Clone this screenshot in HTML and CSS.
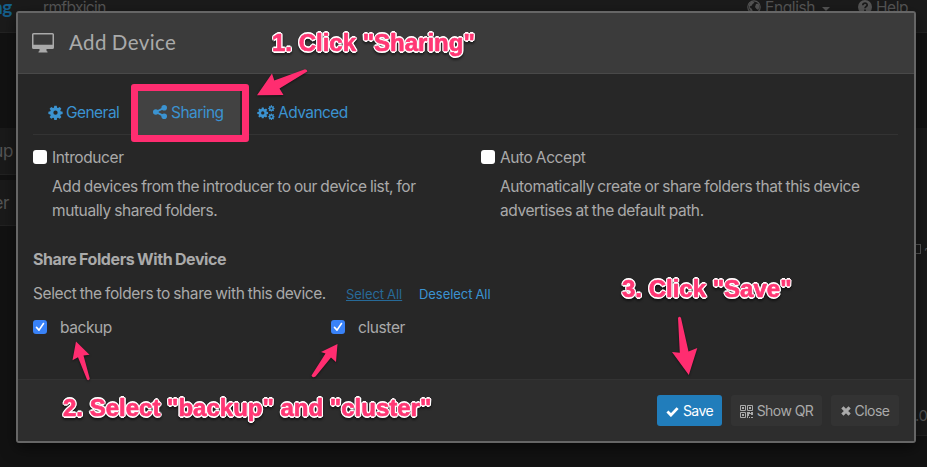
FILE: index.html
```html
<!DOCTYPE html>
<html lang="en">
<head>
<meta charset="utf-8">
<title>Add Device</title>
<link rel="stylesheet" href="styles.css">
</head>
<body>
<svg class="defs" width="0" height="0">
  <defs>
    <symbol id="gear" viewBox="0 0 16 16"><path fill-rule="evenodd" d="M6.7 0.8h2.6l.4 2.1 1 .4 1.8-1.2 1.8 1.8-1.2 1.8.4 1 2.1.4v2.6l-2.1.4-.4 1 1.2 1.8-1.8 1.8-1.8-1.2-1 .4-.4 2.1H6.700l-.4-2.100-1-.4-1.800 1.200-1.800-1.800 1.200-1.800-.4-1L.4 9.700V7.100l2.100-.4.4-1-1.200-1.800 1.800-1.800 1.800 1.200 1-.4zM8 5.900a2.300 2.300 0 1 0 0 4.600 2.300 2.300 0 0 0 0-4.600z"/></symbol>
  </defs>
</svg>
<div class="page">
  <nav class="navbar">
    <b class="brand">ng</b><span class="host">rmfbxicin</span>
    <span class="lang"><svg width="14" height="14" viewBox="0 0 14 14"><circle cx="7" cy="7" r="6.200" fill="none" stroke="currentColor" stroke-width="1.200"/><path fill="currentColor" d="M3 2.500l3-1 1.500 1.200-2 1.200-.5 1.600L3.500 6 2.500 7l2.500 2L6 12 3.500 11 2 8V5zM9 4l2.500-.5L12.500 7l-1.300 3L9.500 9 8 7z"/></svg><span>English</span><i class="caret"></i></span>
    <span class="help"><svg width="14" height="14" viewBox="0 0 14 14"><circle cx="7" cy="7" r="7" fill="currentColor"/><path d="M4.800 5.200C5 2.500 9.300 2.600 9.200 5.100 9.100 6.500 7 6.500 7 8.200M7 9.600v1.800" fill="none" stroke="#1b1b1b" stroke-width="1.700"/></svg><span>Help</span></span>
  </nav>
  <div class="behind">
    <div class="side">
      <div class="tile tall"><span>up</span></div>
      <div class="tile"><span>er</span></div>
    </div>
    <div class="facts"><div class="fact"><i></i>~</div><div class="version">.0</div></div>
  </div>
</div>

<div class="modal">
  <header class="modal-head">
    <svg width="22" height="20" viewBox="0 0 22 20"><path fill="currentColor" fill-rule="evenodd" d="M1.600 0h18.800Q22 0 22 1.600v12.800Q22 16 20.400 16H14.500v1.500q0 .8 1 1V19.500h-9v-1q1-.2 1-1V16H1.600Q0 16 0 14.400V1.600Q0 0 1.600 0zM1.500 1.500v10.300h19V1.500z"/></svg>
    <h1>Add Device</h1>
  </header>
  <div class="modal-body">
    <div class="tabs">
      <a class="tab general"><svg width="15" height="15"><use href="#gear"/></svg><span>General</span></a>
      <a class="tab active"><svg width="14" height="14" viewBox="0 0 14 14"><g fill="currentColor"><circle cx="11.200" cy="2.800" r="2.800"/><circle cx="11.200" cy="11.200" r="2.800"/><circle cx="2.800" cy="7" r="2.800"/></g><path d="M11 2.900L3 7l8 4.100" fill="none" stroke="currentColor" stroke-width="1.900"/></svg><span>Sharing</span></a>
      <a class="tab advanced"><svg width="18" height="15" viewBox="0 0 18 15"><use href="#gear" x="0" y="2" width="11.500" height="11.500"/><use href="#gear" x="11" y="0" width="6.800" height="6.800"/><use href="#gear" x="11" y="8.200" width="6.800" height="6.800"/></svg><span>Advanced</span></a>
    </div>
    <div class="options">
      <div class="option">
        <div class="check-row"><i class="box"></i><span>Introducer</span></div>
        <p>Add devices from the introducer to our device list, for<br>mutually shared folders.</p>
      </div>
      <div class="option">
        <div class="check-row"><i class="box"></i><span>Auto Accept</span></div>
        <p>Automatically create or share folders that this device<br>advertises at the default path.</p>
      </div>
    </div>
    <h2>Share Folders With Device</h2>
    <div class="select-row"><span class="prompt">Select the folders to share with this device.</span><a class="all hover">Select All</a><a class="none">Deselect All</a></div>
    <div class="folders">
      <div class="folder"><i class="box on"><svg width="14" height="14" viewBox="0 0 14 14"><path d="M3.500 7.400l2.500 2.700 4.500-6.600" fill="none" stroke="#fff" stroke-width="1.600" stroke-linecap="round" stroke-linejoin="round"/></svg></i><span>backup</span></div>
      <div class="folder"><i class="box on"><svg width="14" height="14" viewBox="0 0 14 14"><path d="M3.500 7.400l2.500 2.700 4.500-6.600" fill="none" stroke="#fff" stroke-width="1.600" stroke-linecap="round" stroke-linejoin="round"/></svg></i><span>cluster</span></div>
    </div>
  </div>
  <footer class="modal-foot">
    <button class="btn save"><svg width="13" height="11" viewBox="0 0 13 11"><path d="M1.400 5.600l3.500 3.500 6.700-7" fill="none" stroke="currentColor" stroke-width="2.800"/></svg><span>Save</span></button>
    <button class="btn qr"><svg width="13" height="13" viewBox="0 0 13 13"><g fill="none" stroke="currentColor" stroke-width="1"><path d="M.5.5h5v5h-5zM7.500.5h5v5h-5zM.5 7.500h5v5h-5z"/></g><path fill="currentColor" d="M2 2h2v2H2zM9 2h2v2H9zM2 9h2v2H2zM7 7h3v1h1V7h2v3h-2V9H9v2H8v2H7zM9 12h1v1H9zM11 12h2v1h-2z"/></svg><span>Show QR</span></button>
    <button class="btn close"><svg width="10" height="10" viewBox="0 0 10 10"><path d="M1.400 1.400l7.200 7.200M8.600 1.400L1.400 8.600" stroke="currentColor" stroke-width="3.200"/></svg><span>Close</span></button>
  </footer>
</div>

<div class="frame"></div>
<svg class="arrows" width="927" height="467" viewBox="0 0 927 467">
  <g fill="#ff2d70">
    <path d="M305 69.200q2.400.2 2.300 2.400L279.500 88.500l4 6.500-26.500.2 15-21.700 2.300 7z"/>
    <path d="M76 341.500l13.500 13.200-6 .8 6.300 23.200q-1.200 2.500-2.800.8L78 357.200l-5.500 3z"/>
    <path d="M337.500 344l-1.500 18-5-4.500-15.500 19q-3 2-4-1l14-22-4.500-1.500z"/>
    <path d="M678 318q1.500-2.300 3 0l7.500 33.500 8.800-3.500L688.800 375 672 352l7.800.8z"/>
  </g>
</svg>
<div class="note one">1. Click "Sharing"</div>
<div class="note two">2. Select "backup" and "cluster"</div>
<div class="note three">3. Click "Save"</div>
</body>
</html>
```
FILE: styles.css
```css
* { box-sizing: border-box; }
body { margin: 0; width: 927px; height: 467px; overflow: hidden; position: relative; background: #121212; font: 15.5px/24px Inter, "Liberation Sans", sans-serif; letter-spacing: -.4px; word-spacing: -.6px; color: #aaa; }
svg { display: block; flex: none; fill: currentColor; }
span, h1, h2 { white-space: nowrap; }
.defs { position: absolute; }

.page { height: 467px; color: #555; }
.navbar { height: 33px; display: flex; background: #1b1b1b; border-bottom: 1px solid #232323; line-height: 16px; }
.brand { width: 43px; color: #155f8b; font: bold 19px/14px Lato, sans-serif; margin-left: -8px; }
.host { margin-left: 8px; width: 704px; letter-spacing: -.65px; }
.lang, .help { display: flex; gap: 4px; }
.lang { width: 111px; }
.caret { border: 4px solid transparent; border-top-color: #555; border-bottom: 0; height: 4px; margin: 7px 0 0 3px; }
.behind { display: flex; justify-content: space-between; }
.side { padding-top: 95px; width: 18px; display: flex; flex-direction: column; gap: 5px; }
.tile { height: 46px; background: #1a1a1a; border-bottom: 1px solid #222; display: flex; justify-content: flex-end; align-items: center; padding-right: 5px; font-size: 17px; }
.tile:last-child { padding-right: 9px; }
.tall { height: 47px; }
.facts { width: 12px; margin-top: 95px; height: 308px; background: #191919; border-bottom: 1px solid #222; padding-top: 109px; }
.fact { height: 24px; display: flex; align-items: center; gap: 3px; font-size: 12px; }
.fact i { width: 6px; height: 10px; border: 1px solid #555; border-left: 0; flex: none; }
.version { padding-top: 143px; font-size: 15px; }

.modal { position: absolute; left: 16px; top: 11px; width: 900px; height: 432px; border: 2px solid #666; border-radius: 3px; background: #272727; box-shadow: 0 5px 15px rgba(0,0,0,.5); display: flex; flex-direction: column; }
.modal-head { height: 61px; background: #3b3b3b; border-bottom: 1px solid #494949; display: flex; align-items: center; gap: 15px; padding: 0 14px 1px; color: #aaa; }
h1 { margin: 0; font: 20.500px/24px Lato, sans-serif; letter-spacing: .4px; padding-bottom: 1px; }
.modal-body { height: 305px; padding: 15px 16px 0 15px; }
.tabs { height: 46px; border-bottom: 1px solid #333; display: flex; color: #3b93d1; }
.tab { display: flex; align-items: center; gap: 3px; height: 46px; padding: 0 15px; width: 104px; }
.tab span, .check-row span, .folder span, .select-row span, .select-row a { padding-top: 2px; }
.tab span { letter-spacing: -.55px; }
.tab.active { gap: 4px; width: 103px; padding-left: 16px; background: #424242; }
.tab.advanced { gap: 3px; margin-left: 1px; padding-left: 16px; width: 130px; }
.options { display: flex; padding-top: 10px; }
.option { width: 448px; flex: none; }
.check-row { display: flex; align-items: center; gap: 5px; height: 24px; }
.box { width: 14px; height: 14px; background: #fff; border-radius: 3px; flex: none; }
.box.on { background: #3982f7; }
.option p { margin: 6px 0 0 19px; white-space: nowrap; }
h2 { margin: 24px 0 0; font: bold 16px/24px Inter, sans-serif; letter-spacing: -.42px; }
.select-row { display: flex; align-items: center; margin-top: 10px; height: 24px; }
.select-row a { font-size: 13px; letter-spacing: -.05px; color: #3b93d1; white-space: nowrap; }
.prompt { width: 294px; }
.all { margin-left: 19px; width: 73px; }
.select-row .hover { color: #276a98; text-decoration: underline; }
.folders { display: flex; margin-top: 10px; }
.folder { display: flex; align-items: center; gap: 13px; width: 298px; height: 24px; }
.modal-foot { flex: 1; border-top: 1px solid #333; background: #2d2d2d; display: flex; justify-content: flex-end; gap: 9px; padding: 15px 15px 0; }
.btn { height: 31px; border: 0; border-radius: 3px; background: #333; color: #aaa; font: 14px/20px Inter, sans-serif; letter-spacing: -.55px; display: flex; justify-content: center; align-items: center; gap: 4px; padding: 1px 0 0; }
.save { width: 65px; background: #217dbb; color: #fff; }
.qr { width: 91px; }
.close { width: 68px; }

.frame { position: absolute; left: 131px; top: 84px; width: 118px; height: 58px; border: 7px solid #ff2d70; border-radius: 3px; }
.arrows { position: absolute; left: 0; top: 0; filter: drop-shadow(0 1px 1px rgba(0,0,0,.5)); }
.note {
  position: absolute;
  font: bold 24px/28px "Liberation Sans", sans-serif;
  letter-spacing: 0;
  word-spacing: 0;
  color: #ff3774;
  white-space: nowrap;
  -webkit-text-stroke: .7px #ff3774;
  text-shadow: 1.6px 0 #fff, -1.6px 0 #fff, 0 1.6px #fff, 0 -1.6px #fff, 1.2px 1.2px #fff, -1.2px 1.2px #fff, 1.2px -1.2px #fff, -1.2px -1.2px #fff;
  filter: drop-shadow(0 2px 1px rgba(0,0,0,.5));
}
.one { left: 272px; top: 29px; }
.two { left: 63px; top: 394px; }
.three { left: 622px; top: 275px; }
```
